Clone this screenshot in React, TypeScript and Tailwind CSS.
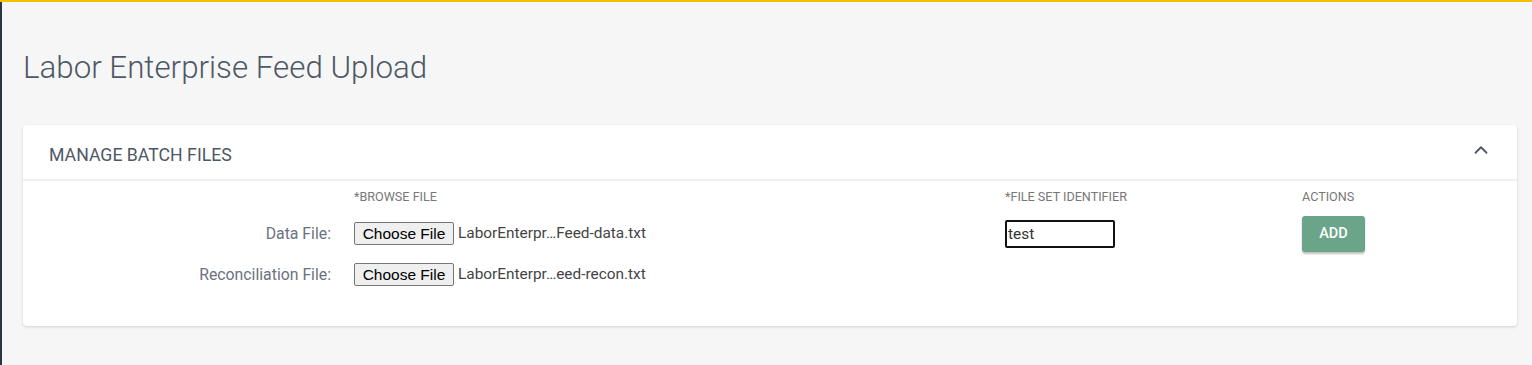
import { ChevronUp } from "lucide-react";

type FileRow = {
  label: string;
  fileName: string;
};

const fileRows: FileRow[] = [
  { label: "Data File:", fileName: "LaborEnterpr…Feed-data.txt" },
  { label: "Reconciliation File:", fileName: "LaborEnterpr…eed-recon.txt" },
];

function FakeFileInput({ fileName }: { fileName: string }) {
  return (
    <div className="flex items-center gap-[4px]">
      <button
        type="button"
        className="h-[23px] w-[100px] rounded-[2px] border border-[#767676] bg-[#efefef] font-['Liberation_Sans',Arial,sans-serif] text-[15.5px] leading-none text-black"
      >
        Choose File
      </button>
      <span className="text-[15.4px] text-[#444]">{fileName}</span>
    </div>
  );
}

export default function App() {
  return (
    <div className="min-h-[365px] border-t-2 border-[#f5c000] bg-[#f6f6f6] font-['Roboto',sans-serif]">
      <div className="min-h-[363px] border-l-2 border-[#2b3440] pl-[21px] pr-[15px]">
        <h1 className="pt-[46px] text-[31.3px] font-light leading-[40px] text-[#4e5865]">
          Labor Enterprise Feed Upload
        </h1>

        <section className="mt-[37px] rounded-[4px] bg-white shadow-[0_1px_3px_rgba(0,0,0,0.15)]">
          <header className="flex h-[56px] items-center justify-between border-b-2 border-[#f0f0f0] pl-[26px] pr-[25px] pt-[6px]">
            <h2 className="text-[17.7px] font-normal text-[#4e5865]">MANAGE BATCH FILES</h2>
            <ChevronUp className="-mt-[10px] h-[22px] w-[22px] text-[#4e5865]" strokeWidth={2} />
          </header>

          <div className="grid grid-cols-[331px_651px_297px_1fr] pb-[40px] pt-[7px]">
            <div />
            <p className="text-[12.6px] leading-[18px] uppercase text-[#777]">*Browse File</p>
            <p className="text-[12.6px] leading-[18px] uppercase text-[#777]">*File Set Identifier</p>
            <p className="text-[12.6px] leading-[18px] uppercase text-[#777]">Actions</p>

            {fileRows.map((row, index) => {
              const rowBox = index === 0 ? "mt-[10px] h-[36px]" : "mt-[11px] h-[23px]";
              return (
                <div key={row.label} className="contents">
                  <div className={`flex items-center justify-end pr-[23px] text-[15.8px] text-[#6b7280] ${rowBox}`}>
                    {row.label}
                  </div>
                  <div className={`flex items-center ${rowBox}`}>
                    <FakeFileInput fileName={row.fileName} />
                  </div>
                  {index === 0 ? (
                    <>
                      <div className={`flex items-center ${rowBox}`}>
                        <input
                          defaultValue="test"
                          className="h-[28px] w-[110px] rounded-[2px] border-2 border-[#111] px-[1px] text-[15.4px] text-[#333] outline-none"
                        />
                      </div>
                      <div className={`flex items-center ${rowBox}`}>
                        <button
                          type="button"
                          className="h-[36px] w-[63px] rounded-[3px] bg-[#6aa58a] text-[14.5px] font-medium text-white shadow-[0_2px_2px_rgba(0,0,0,0.25)]"
                        >
                          ADD
                        </button>
                      </div>
                    </>
                  ) : (
                    <>
                      <div />
                      <div />
                    </>
                  )}
                </div>
              );
            })}
          </div>
        </section>
      </div>
    </div>
  );
}
